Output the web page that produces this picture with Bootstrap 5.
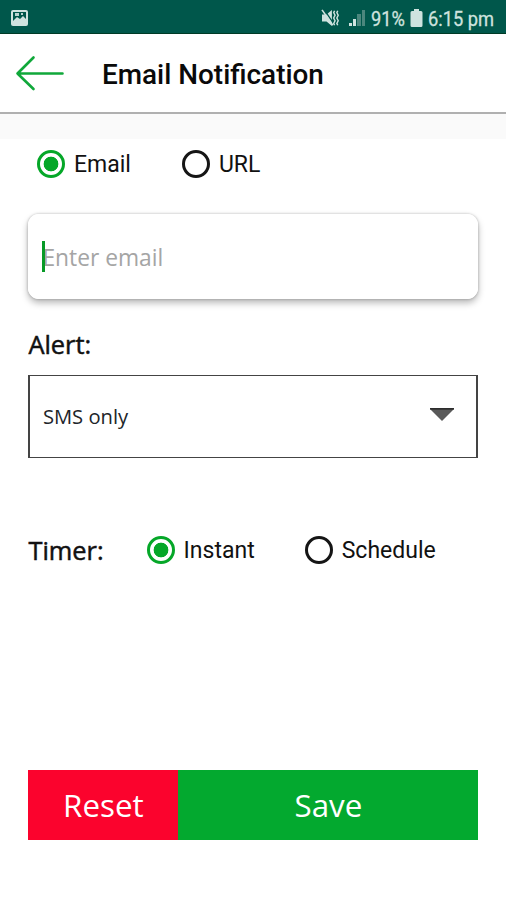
<!DOCTYPE html>
<html lang="en">
<head>
<meta charset="utf-8">
<meta name="viewport" content="width=device-width, initial-scale=1">
<title>Email Notification</title>
<link href="https://cdn.jsdelivr.net/npm/bootstrap@5.3.0/dist/css/bootstrap.min.css" rel="stylesheet">
<style>
body { font-family: Roboto, sans-serif; color: #111; background: #fff; height: 900px; overflow: hidden; }
.status { height: 34px; background: #00574b; border-bottom: 1px solid #003d27; color: #cfe3df; font-size: 21px; line-height: 30px; padding: 2px 11px 0 10px; }
.squeeze { display: inline-block; white-space: nowrap; transform-origin: left center; transform: scaleX(.87); padding-top: 3px; -webkit-text-stroke: .3px #cfe3df; }
.pct { width: 34px; }
.clock { width: 67px; }
.topbar { height: 80px; padding: 0 15px; border-bottom: 2px solid #b0b0b0; box-shadow: 0 1px 3px rgba(0,0,0,.13); }
.title { font-size: 27.9px; font-weight: 500; line-height: 34px; margin: 3px 0 0 37px; color: #0a0a0a; }
.strip { height: 25px; background: #fafafa; }
.content { padding: 0 27.6px 0 28.4px; }
.open { font-family: "Open Sans", sans-serif; }
.choice { font-size: 23px; line-height: 30px; gap: 9px; }
.choice span { padding-top: 2px; }
.choice .form-check-input { width: 28px; height: 28px; margin: 0; border: 3px solid #151515; flex: none; box-shadow: none; background-color: #fff; }
.choice .form-check-input:checked { border-color: #05a728; background: radial-gradient(circle, #05a728 7px, #fff 7.7px); }
.targets { padding: 9px 0 0 8.6px; height: 75px; gap: 51px; }
.field { height: 85px; border-radius: 11px; box-shadow: 0 0 2px 1px rgba(0,0,0,.12), 0 4px 7px rgba(0,0,0,.28); position: relative; }
.field .form-control { font-size: 22.8px; padding: 2px 14px 0; border-radius: 11px; background: #fff; }
.field .form-control::placeholder { color: #a5a5a5; opacity: 1; }
.caret { position: absolute; left: 13.6px; top: 27px; width: 3px; height: 31px; background: #079a27; }
.heading { font-size: 25.4px; line-height: 34px; font-weight: 400; -webkit-text-stroke: .5px #111; color: #111; margin: 0; }
.alert-heading-row { margin: 28px 0 14px; }
.picker { height: 83px; border: 1px solid #444; border-left-width: 2px; border-right-width: 2px; border-radius: 0; padding: 0 22px 4px 12.5px; font-size: 20.2px; background: #fff; }
.picker span { padding-top: 4px; }
.timer { margin-top: 74px; height: 36px; }
.timer .heading { margin-right: 43px; }
.timer .choice + .choice { margin-left: 50px; }
.actions { margin-top: 202px; height: 70px; }
.actions .btn { border: 0; border-radius: 0; font-size: 31.3px; line-height: 1; color: #fff; padding: 2px 0 0; }
.reset { width: 150px; background: #fb032d !important; }
.save { background: #03a92f !important; }
</style>
<script src="https://cdn.jsdelivr.net/npm/bootstrap@5.3.0/dist/js/bootstrap.bundle.min.js"></script>
</head>
<body>
<div class="status d-flex align-items-center">
  <svg width="19" height="18" viewBox="0 0 19 18"><rect x="1" y="1" width="17" height="16" rx="2" fill="#cfe3df"/><path d="M3 3h13v7l-3-3-3 3-3-2-4 4z" fill="#00574b"/><path d="M5 4h4v3H5zM11 4h2v2h-2z" fill="#b9d3cf"/></svg>
  <svg class="ms-auto" width="20" height="18" viewBox="1 0 20 20" fill="none"><path d="M1 6h5l6-5v18l-6-5H1z" fill="#cfe3df"/><path d="M3 0l12 18" stroke="#00574b" stroke-width="1.5"/><path d="M1 1l12 17" stroke="#cfe3df" stroke-width="1.8"/><path d="M15 2l-1 2 1.5 3-1.5 3 1.5 3-1.5 3 1 2M18.5 2l-1 2 1.5 3-1.5 3 1.5 3-1.5 3 1 2" stroke="#cfe3df" stroke-width="1.6"/></svg>
  <svg class="ms-2" width="18" height="18" viewBox="1 0 18 18"><path d="M1 14h3v3H1zM5 10h3v7H5z" fill="#cfe3df"/><path d="M9 5h4v12H9zM14 1h3v16h-3z" fill="#4b877d"/></svg>
  <span class="squeeze pct ms-1">91%</span>
  <svg class="ms-1 me-1" width="15" height="18" viewBox="-1 0 15 18"><path d="M4 0h5v2h2a1.5 1.5 0 0 1 1.5 1.5v13A1.5 1.5 0 0 1 11 18H2A1.5 1.5 0 0 1 .5 16.5v-13A1.5 1.5 0 0 1 2 2h2z" fill="#cfe3df"/></svg>
  <span class="squeeze clock">6:15 pm</span>
</div>
<header class="topbar d-flex align-items-center">
  <svg width="50" height="36" viewBox="0 0 50 36" fill="none" stroke="#10a83a" stroke-width="2.6" stroke-linecap="round" stroke-linejoin="round"><path d="M2.5 18.5H47.5M18.5 2.5l-16 16 16 15.5"/></svg>
  <h1 class="title">Email Notification</h1>
</header>
<div class="strip"></div>
<main class="content">
  <div class="targets d-flex align-items-start">
    <label class="choice d-flex align-items-center"><input class="form-check-input" type="radio" name="target" checked><span>Email</span></label>
    <label class="choice d-flex align-items-center"><input class="form-check-input" type="radio" name="target"><span>URL</span></label>
  </div>
  <div class="field open"><input class="form-control border-0 h-100 open shadow-none" type="text" placeholder="Enter email"><span class="caret"></span></div>
  <h2 class="heading open alert-heading-row">Alert:</h2>
  <button class="picker open btn w-100 d-flex align-items-center justify-content-between text-dark"><span>SMS only</span><svg width="24" height="14" viewBox="0 0 24 14"><path d="M0 1h24L12 13z" fill="#595959"/><path d="M0 .8h24" stroke="#222" stroke-width="1.5"/></svg></button>
  <div class="timer d-flex align-items-center">
    <h2 class="heading open">Timer:</h2>
    <label class="choice d-flex align-items-center"><input class="form-check-input" type="radio" name="timer" checked><span>Instant</span></label>
    <label class="choice d-flex align-items-center"><input class="form-check-input" type="radio" name="timer"><span>Schedule</span></label>
  </div>
  <div class="actions d-flex">
    <button class="btn reset open">Reset</button>
    <button class="btn save open flex-grow-1">Save</button>
  </div>
</main>
</body>
</html>
